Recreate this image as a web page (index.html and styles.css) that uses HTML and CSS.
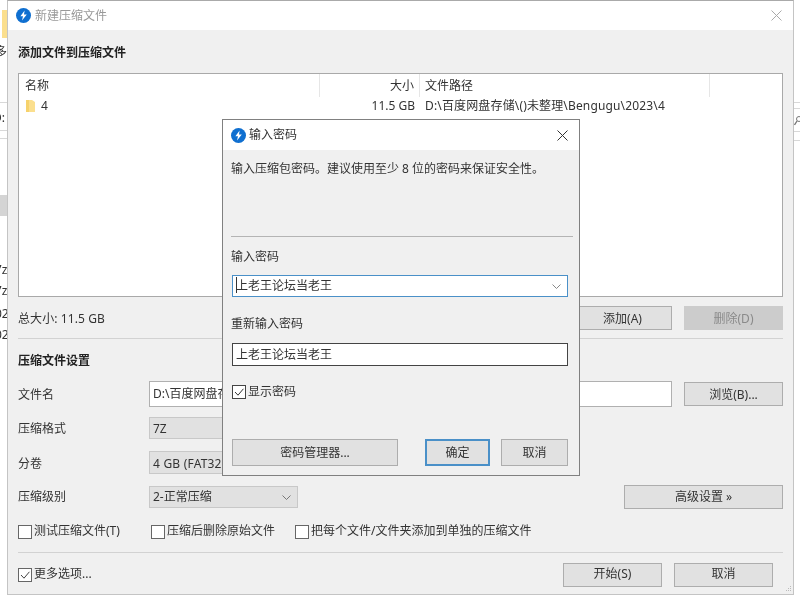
FILE: index.html
```html
<!DOCTYPE html>
<html lang="zh-CN">
<head>
<meta charset="utf-8">
<title>新建压缩文件</title>
<link rel="stylesheet" href="styles.css">
</head>
<body>
<div class="stage">
  <div class="bg-left">
    <div class="bg-folder"></div>
    <div class="bg-text t-duo">多</div>
    <div class="bg-line l-a"></div>
    <div class="bg-text t-d">D:</div>
    <div class="bg-line l-b"></div>
    <div class="bg-line l-c"></div>
    <div class="bg-block"></div>
    <div class="bg-text t-f1">7z</div>
    <div class="bg-text t-f2">7z</div>
    <div class="bg-text t-f3">02</div>
    <div class="bg-text t-f2">02</div>
  </div>
  <div class="bg-right">
    <div class="bg-line r-a"></div>
    <div class="bg-line r-b"></div>
    <svg class="bg-search" width="6" height="12" viewBox="0 0 6 12"><circle cx="5" cy="3" r="2.5" fill="none" stroke="#777"/><path d="M3 5 L0.5 9" stroke="#777" stroke-width="1.4"/></svg>
    <div class="bg-line r-c"></div>
    <div class="bg-line r-d"></div>
  </div>

  <section class="window main">
    <header class="titlebar">
      <svg class="logo" width="15" height="15" viewBox="0 0 15 15"><circle cx="7.5" cy="7.5" r="7.5" fill="#0f6fd0"/><path d="M8.6 2.6 L4.4 8.2 H7 L6 12.4 L10.8 6.6 H8 Z" fill="#fff"/></svg>
      <span class="title-text faded">新建压缩文件</span>
      <svg class="close" width="11" height="11" viewBox="0 0 11 11"><path d="M.5 .5 L10.5 10.5 M10.5 .5 L.5 10.5" stroke="#aaa" fill="none"/></svg>
    </header>
    <div class="main-body">
      <h2 class="heading first">添加文件到压缩文件</h2>
      <div class="list">
        <div class="list-head">
          <div class="col-name">名称</div>
          <div class="col-size">大小</div>
          <div class="col-path">文件路径</div>
          <div class="col-rest"></div>
        </div>
        <div class="list-row">
          <div class="col-name">
            <svg class="folder" width="9" height="12" viewBox="0 0 9 12"><path d="M0 0 H6 L9 2 V12 H0 Z" fill="#fbdf8e"/><path d="M0 0 H3 V12 H0 Z" fill="#f6d26c"/></svg>
            <span>4</span>
          </div>
          <div class="col-size">11.5 GB</div>
          <div class="col-path wide">D:\百度网盘存储\()未整理\Bengugu\2023\4</div>
        </div>
      </div>
      <div class="total-row">
        <span class="grow">总大小: 11.5 GB</span>
        <button class="btn low">添加(A)</button>
        <button class="btn low disabled">删除(D)</button>
      </div>
      <hr class="sep sep-top">
      <h2 class="heading second">压缩文件设置</h2>
      <div class="form-row r-file">
        <label class="form-label low">文件名</label>
        <div class="field file-field">D:\百度网盘存储\</div>
        <button class="btn low">浏览(B)...</button>
      </div>
      <div class="form-row r-format">
        <label class="form-label low">压缩格式</label>
        <div class="select h22 low">7Z</div>
      </div>
      <div class="form-row r-vol">
        <label class="form-label low">分卷</label>
        <div class="select h23 low wide-more">4 GB (FAT32)</div>
      </div>
      <div class="form-row r-level">
        <label class="form-label">压缩级别</label>
        <div class="select h22">2-正常压缩
          <svg class="chev" width="9" height="5" viewBox="0 0 9 5"><path d="M.5 .5 L4.5 4.5 L8.5 .5" stroke="#777" fill="none"/></svg>
        </div>
        <button class="btn adv">高级设置 »</button>
      </div>
      <div class="check-row">
        <div class="check w133"><span class="box"></span>测试压缩文件(T)</div>
        <div class="check w144"><span class="box"></span>压缩后删除原始文件</div>
        <div class="check"><span class="box"></span>把每个文件/文件夹添加到单独的压缩文件</div>
      </div>
      <hr class="sep sep-bottom">
      <div class="foot-row">
        <div class="check grow"><span class="box">
          <svg width="12" height="12" viewBox="0 0 12 12"><path d="M2 6 L5 9.2 L10.4 2.8" stroke="#444" fill="none"/></svg>
        </span>更多选项...</div>
        <button class="btn high">开始(S)</button>
        <button class="btn high">取消</button>
      </div>
    </div>
    <svg class="grip" width="7" height="7" viewBox="0 0 7 7"><path d="M5 0h1v1h-1z M3 2h1v1h-1z M5 2h1v1h-1z M1 4h1v1h-1z M3 4h1v1h-1z M5 4h1v1h-1z" fill="#bbb"/></svg>
  </section>

  <section class="window dialog">
    <header class="titlebar dlg-title">
      <svg class="logo" width="15" height="15" viewBox="0 0 15 15"><circle cx="7.5" cy="7.5" r="7.5" fill="#0f6fd0"/><path d="M8.6 2.6 L4.4 8.2 H7 L6 12.4 L10.8 6.6 H8 Z" fill="#fff"/></svg>
      <span class="title-text dlg-name">输入密码</span>
      <svg class="close" width="11" height="11" viewBox="0 0 11 11"><path d="M.5 .5 L10.5 10.5 M10.5 .5 L.5 10.5" stroke="#333" fill="none"/></svg>
    </header>
    <div class="dlg-body">
      <p class="dlg-hint">输入压缩包密码。建议使用至少 8 位的密码来保证安全性。</p>
      <hr class="dlg-sep">
      <div class="dlg-label l1">输入密码</div>
      <div class="field combo"><span class="caret"></span>上老王论坛当老王
        <svg class="chev" width="9" height="5" viewBox="0 0 9 5"><path d="M.5 .5 L4.5 4.5 L8.5 .5" stroke="#888" fill="none"/></svg>
      </div>
      <div class="dlg-label l2">重新输入密码</div>
      <div class="field pass">上老王论坛当老王</div>
      <div class="check show"><span class="box dark">
        <svg width="12" height="12" viewBox="0 0 12 12"><path d="M2 6 L5 9.2 L10.4 2.8" stroke="#333" fill="none"/></svg>
      </span>显示密码</div>
      <div class="dlg-foot">
        <button class="btn mgr">密码管理器...</button>
        <button class="btn ok">确定</button>
        <button class="btn cancel">取消</button>
      </div>
    </div>
  </section>
</div>
</body>
</html>
```
FILE: styles.css
```css
* { box-sizing: border-box; }
html, body { margin: 0; padding: 0; background: #fff; }
body { width: 800px; height: 601px; overflow: hidden; }
.stage {
  position: relative;
  width: 800px;
  height: 601px;
  background: #fff;
  color: #333;
  font: 12px/16px "Noto Sans", "Noto Sans CJK SC", sans-serif;
  filter: blur(0.45px);
  overflow: hidden;
}

/* app showing behind the windows */
.bg-left { position: absolute; left: 0; top: 0; width: 7px; height: 601px; overflow: hidden; display: flex; flex-direction: column; }
.bg-right { position: absolute; left: 794px; top: 0; width: 6px; height: 601px; overflow: hidden; display: flex; flex-direction: column; }
.bg-folder { width: 5px; height: 28px; margin: 10px 0 0 2px; background: #fbdf8e; flex: none; }
.bg-text { height: 16px; flex: none; white-space: nowrap; width: 20px; }
.t-duo { margin: 6px 0 0 -5px; }
.l-a { margin-top: 42px; }
.t-d { margin: 7px 0 0 -7px; }
.l-b { margin-top: 4px; }
.l-c { margin-top: 7px; }
.bg-block { height: 21px; margin-top: 56px; background: #d4d4d4; flex: none; }
.t-f1 { margin: 46px 0 0 -5px; }
.t-f2 { margin: 5px 0 0 -5px; }
.t-f3 { margin: 7px 0 0 -5px; }
.bg-line { height: 1px; background: #d8d8d8; flex: none; }
.r-a { margin-top: 102px; }
.r-b { margin-top: 5px; }
.bg-search { margin-top: 7px; flex: none; }
.r-c { margin-top: 3px; }
.r-d { margin-top: 8px; }

/* windows */
.window { position: absolute; background: #f0f0f0; }
.main { left: 7px; top: 0; width: 787px; height: 595px; border: 1px solid #c4c4c4; border-top-color: #aaa; }
.dialog { left: 222px; top: 119px; width: 358px; height: 357px; border: 1px solid #808080; }
.titlebar { height: 29px; background: #fff; display: flex; align-items: center; padding: 0 11px 0 8px; }
.dlg-title { height: 30px; padding: 0 11px 0 8px; }
.logo { flex: none; }
.title-text { margin-left: 4px; flex: 1; }
.dlg-name { margin-left: 3px; }
.faded { color: #999; }
.close { flex: none; }

.main-body { padding: 0 10px; }
.heading { margin: 0; padding-top: 2px; font-size: 12px; line-height: 18px; font-weight: 700; color: #222; }
.first { margin-top: 12px; }
.second { margin-top: 11px; }

.list { margin-top: 11px; height: 224px; background: #fff; border: 1px solid #a9a9a9; }
.list-head { display: flex; height: 23px; }
.list-head > div { border-right: 1px solid #e6e6e6; line-height: 24px; }
.list-row { display: flex; height: 17px; line-height: 17px; }
.col-name { width: 301px; padding-left: 6px; display: flex; align-items: center; }
.col-size { width: 100px; text-align: right; padding-right: 5px; }
.col-path { width: 290px; padding-left: 5px; white-space: nowrap; }
.wide { letter-spacing: 0.15px; }
.col-rest { flex: 1; border-right: 0 !important; }
.folder { margin: 0 6px 0 1px; }

.grow { flex: 1; }
.total-row { display: flex; align-items: center; gap: 12px; padding-top: 9px; }
.total-row .grow { padding-top: 2px; letter-spacing: 0.1px; }

.btn {
  width: 99px;
  height: 24px;
  padding: 0;
  flex: none;
  font: inherit;
  color: #333;
  background: #e1e1e1;
  border: 1px solid #adadad;
}
.btn.low { padding-top: 2px; }
.btn.high { padding-bottom: 2px; }
.disabled { background: #ccc; border-color: #ccc; color: #8a8a8a; }

.sep { margin: 0; border: 0; height: 1px; background: #d2d2d2; }
.sep-top { margin-top: 8px; }
.sep-bottom { margin-top: 13px; }

.form-row { display: flex; align-items: center; }
.form-label { width: 131px; flex: none; }
.form-label.low { padding-top: 2px; }
.r-file { margin-top: 11px; }
.r-format { margin-top: 10px; }
.r-vol { margin-top: 12px; }
.r-level { margin-top: 11px; }

.field { background: #fff; border: 1px solid #7a7a7a; padding-left: 4px; white-space: nowrap; overflow: hidden; }
.file-field { width: 523px; height: 26px; line-height: 24px; padding-left: 3px; border-color: #b0b0b0; margin-right: 12px; }

.select {
  position: relative;
  width: 149px;
  flex: none;
  padding-left: 3px;
  background: #e1e1e1;
  border: 1px solid #c8c8c8;
  white-space: nowrap;
}
.select.low { padding-top: 1px; }
.wide-more { letter-spacing: 0.2px; }
.h22 { height: 22px; line-height: 20px; }
.h23 { height: 23px; line-height: 21px; }
.chev { position: absolute; right: 6px; top: 8px; }
.adv { width: 159px; margin-left: 326px; }

.check-row { display: flex; margin-top: 16px; height: 14px; }
.check { display: flex; align-items: flex-start; height: 14px; line-height: 12px; white-space: nowrap; }
.w133 { width: 133px; }
.w144 { width: 144px; }
.box { width: 14px; height: 14px; flex: none; margin-right: 2px; background: #fff; border: 1px solid #666; display: block; }
.box svg { display: block; margin: 0; }
.box.dark { border-color: #444; }

.foot-row { display: flex; align-items: center; gap: 12px; margin-top: 10px; padding-right: 10px; }
.grip { position: absolute; right: 1px; bottom: 1px; }

/* password dialog */
.dlg-body { padding: 0 11px 0 9px; }
.dlg-hint { margin: 0 0 0 -1px; padding-top: 11px; height: 86px; }
.dlg-sep { margin: 0 -5px 0 -1px; border: 0; height: 1px; background: #b4b4b4; }
.dlg-label { line-height: 16px; height: 16px; margin-left: -1px; }
.l1 { margin-top: 12px; }
.l2 { margin-top: 19px; }
.combo, .pass { width: 336px; padding-left: 3px; }
.combo { position: relative; height: 22px; line-height: 20px; margin-top: 10px; border-color: #4a90c8; }
.caret { display: inline-block; width: 1px; height: 16px; margin-right: -1px; vertical-align: -3px; background: #333; }
.pass { height: 23px; line-height: 21px; margin-top: 11px; border-color: #444; }
.check.show { margin-top: 19px; height: 13px; line-height: 16px; align-items: center; }
.dlg-foot { display: flex; margin-top: 41px; }
.dlg-foot .btn { height: 27px; }
.mgr { width: 166px; }
.ok { width: 65px; margin-left: 27px; border: 2px solid #4a90c8; }
.cancel { width: 67px; margin-left: 11px; }
```
